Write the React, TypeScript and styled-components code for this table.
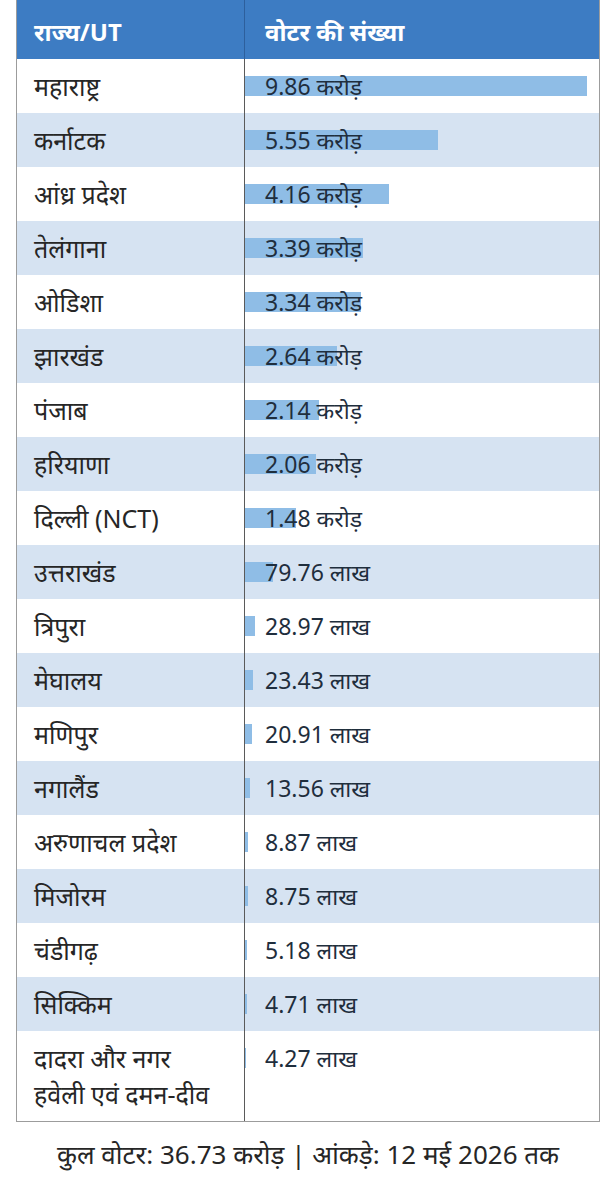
import React from "react";
import styled, { createGlobalStyle } from "styled-components";

const Global = createGlobalStyle`
  html, body { margin: 0; padding: 0; background: #ffffff; }
  body { font-family: "Noto Sans", "Noto Sans Devanagari", "Lato", sans-serif; }
`;

const Page = styled.div`
  width: 616px;
  height: 1184px;
  padding: 0 16px;
  box-sizing: border-box;
  background: #ffffff;
`;

const Table = styled.div`
  display: grid;
  grid-template-columns: 227px 1fr;
  border: 1px solid #9c9c9c;
  border-top: none;
`;

const HeadCell = styled.div<{ $divider?: boolean }>`
  height: 59px;
  box-sizing: border-box;
  background: #3d7cc3;
  color: #ffffff;
  font-weight: 700;
  font-size: 24px;
  display: flex;
  align-items: center;
  padding: 4px 0 0 ${(p) => (p.$divider ? "20px" : "17px")};
  border-left: ${(p) => (p.$divider ? "1px solid #2d5f9c" : "none")};
`;

const NameCell = styled.div<{ $alt: boolean }>`
  background: ${(p) => (p.$alt ? "#d6e3f2" : "#ffffff")};
  color: #262626;
  font-size: 25px;
  line-height: 36px;
  padding: 9px 4px 9px 17px;
  white-space: nowrap;
`;

const ValueCell = styled.div<{ $alt: boolean }>`
  background: ${(p) => (p.$alt ? "#d6e3f2" : "#ffffff")};
  border-left: 1px solid #5a5a5a;
  padding: 9px 0;
  display: grid;
  align-content: start;
`;

const Bar = styled.div`
  grid-area: 1 / 1;
  align-self: start;
  margin-top: 8px;
  height: 20px;
  background: #8fbde6;
`;

const ValueText = styled.div`
  grid-area: 1 / 1;
  font-size: 23px;
  line-height: 36px;
  color: #1f2e3d;
  padding-left: 20px;
`;

const Footer = styled.div`
  text-align: center;
  font-size: 26px;
  color: #262626;
  padding-top: 14px;
  white-space: nowrap;
`;

type Row = { name: React.ReactNode; label: string; crore: number };

const rows: Row[] = [
  { name: "महाराष्ट्र", label: "9.86 करोड़", crore: 9.86 },
  { name: "कर्नाटक", label: "5.55 करोड़", crore: 5.55 },
  { name: "आंध्र प्रदेश", label: "4.16 करोड़", crore: 4.16 },
  { name: "तेलंगाना", label: "3.39 करोड़", crore: 3.39 },
  { name: "ओडिशा", label: "3.34 करोड़", crore: 3.34 },
  { name: "झारखंड", label: "2.64 करोड़", crore: 2.64 },
  { name: "पंजाब", label: "2.14 करोड़", crore: 2.14 },
  { name: "हरियाणा", label: "2.06 करोड़", crore: 2.06 },
  { name: "दिल्ली (NCT)", label: "1.48 करोड़", crore: 1.48 },
  { name: "उत्तराखंड", label: "79.76 लाख", crore: 0.7976 },
  { name: "त्रिपुरा", label: "28.97 लाख", crore: 0.2897 },
  { name: "मेघालय", label: "23.43 लाख", crore: 0.2343 },
  { name: "मणिपुर", label: "20.91 लाख", crore: 0.2091 },
  { name: "नगालैंड", label: "13.56 लाख", crore: 0.1356 },
  { name: "अरुणाचल प्रदेश", label: "8.87 लाख", crore: 0.0887 },
  { name: "मिजोरम", label: "8.75 लाख", crore: 0.0875 },
  { name: "चंडीगढ़", label: "5.18 लाख", crore: 0.0518 },
  { name: "सिक्किम", label: "4.71 लाख", crore: 0.0471 },
  {
    name: (
      <>
        दादरा और नगर
        <br />
        हवेली एवं दमन-दीव
      </>
    ),
    label: "4.27 लाख",
    crore: 0.0427,
  },
];

const MAX_BAR = 342;
const MAX_VAL = 9.86;

export default function App() {
  return (
    <>
      <Global />
      <Page>
        <Table>
          <HeadCell>राज्य/UT</HeadCell>
          <HeadCell $divider>वोटर की संख्या</HeadCell>
          {rows.map((r, i) => {
            const alt = i % 2 === 1;
            return (
              <React.Fragment key={i}>
                <NameCell $alt={alt}>{r.name}</NameCell>
                <ValueCell $alt={alt}>
                  <Bar style={{ width: `${(r.crore / MAX_VAL) * MAX_BAR}px` }} />
                  <ValueText>{r.label}</ValueText>
                </ValueCell>
              </React.Fragment>
            );
          })}
        </Table>
        <Footer>कुल वोटर: 36.73 करोड़ | आंकड़े: 12 मई 2026 तक</Footer>
      </Page>
    </>
  );
}
